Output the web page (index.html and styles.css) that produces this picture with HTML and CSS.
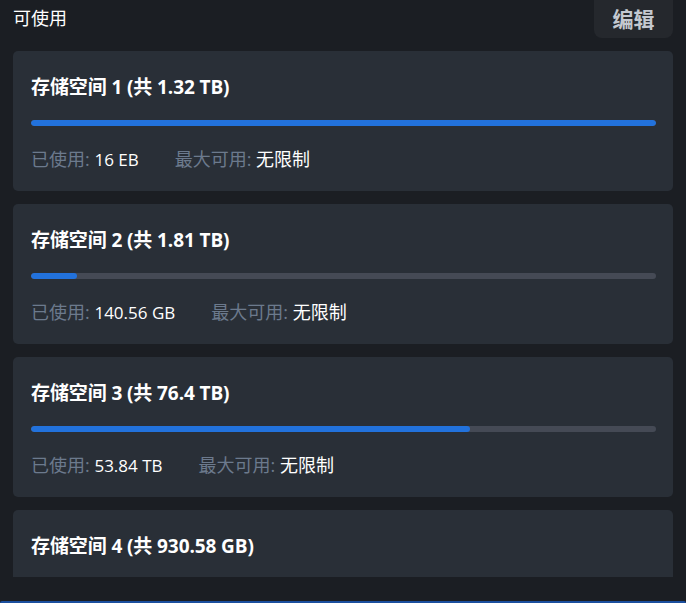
FILE: index.html
```html
<!DOCTYPE html>
<html lang="zh-CN">
<head>
<meta charset="utf-8">
<link rel="stylesheet" href="styles.css">
</head>
<body>
<div class="page">
  <header class="head">
    <span class="head-title">可使用</span>
    <button class="edit">编辑</button>
  </header>
  <div class="list">
    <section class="card">
      <h2 class="card-title">存储空间 1 (共 1.32 TB)</h2>
      <div class="bar"><div class="fill" style="width:100%"></div></div>
      <div class="info">
        <span class="item"><span class="lbl">已使用: </span><span class="num">16 EB</span></span>
        <span class="item"><span class="lbl">最大可用: </span>无限制</span>
      </div>
    </section>
    <section class="card">
      <h2 class="card-title">存储空间 2 (共 1.81 TB)</h2>
      <div class="bar"><div class="fill" style="width:7.4%"></div></div>
      <div class="info">
        <span class="item"><span class="lbl">已使用: </span><span class="num">140.56 GB</span></span>
        <span class="item"><span class="lbl">最大可用: </span>无限制</span>
      </div>
    </section>
    <section class="card">
      <h2 class="card-title">存储空间 3 (共 76.4 TB)</h2>
      <div class="bar"><div class="fill" style="width:70.3%"></div></div>
      <div class="info">
        <span class="item"><span class="lbl">已使用: </span><span class="num">53.84 TB</span></span>
        <span class="item"><span class="lbl">最大可用: </span>无限制</span>
      </div>
    </section>
    <section class="card">
      <h2 class="card-title">存储空间 4 (共 930.58 GB)</h2>
      <div class="bar"><div class="fill" style="width:20%"></div></div>
    </section>
  </div>
  <div class="bottom-line"></div>
</div>
</body>
</html>
```
FILE: styles.css
```css
* { box-sizing: border-box; }
html, body {
  margin: 0;
  padding: 0;
  background: #1b1e23;
  height: 603px;
  overflow: hidden;
}
body {
  font-family: "Open Sans", "Noto Sans CJK SC", sans-serif;
  color: #ffffff;
}
.page {
  height: 603px;
  display: flex;
  flex-direction: column;
}
.head {
  height: 38px;
  padding: 0 13px;
  display: flex;
  justify-content: space-between;
  align-items: flex-start;
  flex: none;
}
.head-title {
  font-size: 18px;
  line-height: 36px;
}
.edit {
  width: 79px;
  height: 38px;
  border: none;
  border-radius: 0 0 8px 8px;
  background: #25282d;
  color: #c3c8d0;
  font-family: inherit;
  font-weight: 700;
  font-size: 21px;
  line-height: 38px;
  padding: 0;
}
.list {
  margin: 13px 13px 0;
  height: 526px;
  overflow: hidden;
  display: flex;
  flex-direction: column;
  gap: 13px;
  flex: none;
}
.card {
  background: #292f37;
  border-radius: 5px;
  padding: 22px 17px 19px 18px;
  flex: none;
}
.card-title {
  margin: 0;
  font-size: 19px;
  line-height: 28px;
  height: 28px;
  font-weight: 700;
  white-space: nowrap;
  letter-spacing: -0.1px;
}
.bar {
  margin-top: 19px;
  height: 6px;
  border-radius: 3px;
  background: #454a55;
  overflow: hidden;
}
.fill {
  height: 100%;
  border-radius: 3px;
  background: #2272dc;
}
.info {
  margin-top: 20px;
  font-size: 18px;
  line-height: 26px;
  height: 26px;
  display: flex;
  white-space: nowrap;
}
.item { margin-right: 36px; }
.num { font-size: 17px; line-height: 20px; }
.lbl { color: #6c7a8d; }
.bottom-line {
  margin-top: auto;
  height: 2px;
  background: #1b4f9e;
  border-radius: 2px 2px 0 0;
}
```
